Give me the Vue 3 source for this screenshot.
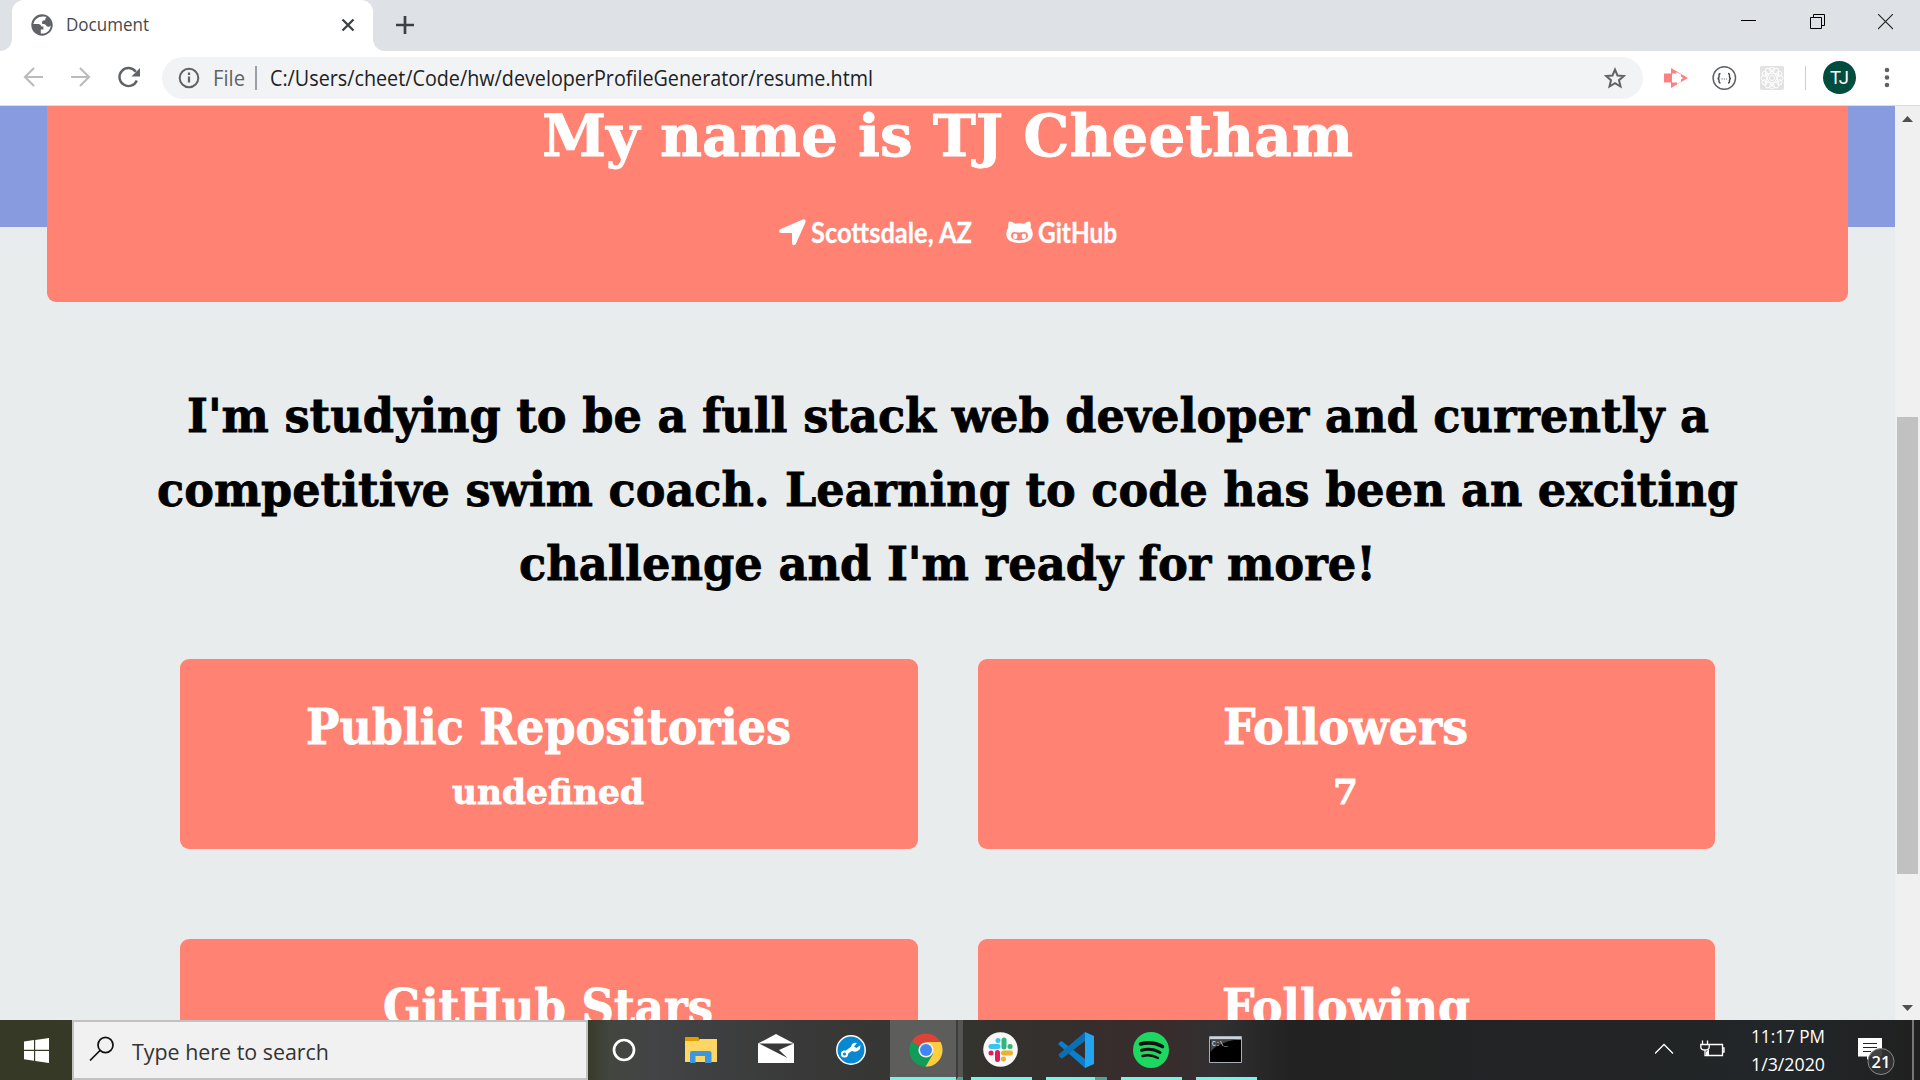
<script setup>
import { h } from 'vue'

// One line of text set to an exact measure
const Line = (p) =>
  h('svg', { class: 'line', width: p.w, height: p.size * 1.2, style: 'display:block;overflow:visible;flex:none' }, [
    h('text', { x: 0, y: p.size, 'font-size': p.size, textLength: p.w, lengthAdjust: 'spacingAndGlyphs', fill: 'currentColor' }, p.text)
  ])
Line.props = ['text', 'w', 'size']

const bio = [
  { text: "I'm studying to be a full stack web developer and currently a", w: 1522 },
  { text: 'competitive swim coach. Learning to code has been an exciting', w: 1581 },
  { text: "challenge and I'm ready for more!", w: 857 }
]
const cards = [
  { title: 'Public Repositories', w: 485, value: 'undefined', vw: 192 },
  { title: 'Followers', w: 245, value: '7', vw: 25 },
  { title: 'GitHub Stars', w: 330 },
  { title: 'Following', w: 248 }
]
</script>

<template>
  <div class="screen">
    <div class="tabs">
      <div class="tabfoot"></div>
      <div class="tab">
        <svg width="22" height="22" viewBox="0 0 22 22"><circle cx="11" cy="11" r="10.7" fill="#5f6368" /><path d="M12 2.500c-5 .2-8.800 3-9.600 7.500l5 .1c1.600 0 2.600 1 2.800 2.400h2.200v3H9.800v4c6 .6 9.600-3.300 9.900-8.100-1.200 1.700-3.700 1.600-4.400.3-.6-1.400-2.100-1.900-3.900-1.700-1.200-2.600.2-3.700 2.700-3.800.2-1.700.9-2.600 1.600-3.100-1.100-.5-2.400-.7-3.700-.6z" fill="#fff" /></svg>
        <Line class="doc" text="Document" :w="83" :size="18.500" />
        <svg class="close" width="14" height="14" viewBox="0 0 14 14"><path d="M1.500 1.500l11 11m0-11l-11 11" stroke="#3c4043" stroke-width="2.300" /></svg>
      </div>
      <div class="rest">
        <svg class="plus" width="18" height="18" viewBox="0 0 18 18"><path d="M9 0v18M0 9h18" stroke="#3c4043" stroke-width="2.700" /></svg>
        <div class="wins">
          <svg width="15" height="16" viewBox="0 0 15 16"><path d="M0 6.500h15" stroke="#000" /></svg>
          <svg width="15" height="16" viewBox="0 0 15 16"><path d="M.5 3.500h11v11H.5zM3.500 3.500v-3h11v11h-3" fill="none" stroke="#000" /></svg>
          <svg width="15" height="16" viewBox="0 0 15 16"><path d="M0 0l15 15m0-15L0 15" stroke="#222" stroke-width="1.100" /></svg>
        </div>
      </div>
    </div>

    <div class="toolbar">
      <svg width="140" height="54" viewBox="0 0 140 54"><g fill="none" stroke-width="2.200"><path d="M43 26H25m9-9l-9 9 9 9M71 26h18m-9-9l9 9-9 9" stroke="#babcbe" /><path d="M136.800 29.500a9 9 0 1 1-1-8.700" stroke="#5f6368" stroke-width="2.400" /></g><path d="M140 17v8.500h-8.500z" fill="#5f6368" /></svg>
      <div class="omni">
        <svg width="22" height="22" viewBox="0 0 22 22"><circle cx="11" cy="11" r="9.300" fill="none" stroke="#5f6368" stroke-width="2" /><path d="M11 9.500v6M11 5.500v2.400" stroke="#5f6368" stroke-width="2.200" /></svg>
        <Line class="file" text="File" :w="32" :size="21.500" />
        <i class="bar"></i>
        <Line class="url" text="C:/Users/cheet/Code/hw/developerProfileGenerator/resume.html" :w="603" :size="21.500" />
        <svg class="star" width="22" height="22" viewBox="0 0 22 22"><path d="M11 2.600l2.500 5.900 6.400.5-4.900 4.200 1.500 6.300L11 16.200l-5.500 3.300L7 13.200 2.100 9l6.400-.5z" fill="none" stroke="#5f6368" stroke-width="2" /></svg>
      </div>
      <svg class="ext" width="256" height="36" viewBox="0 0 256 36">
        <g fill="#ff8080"><path d="M0 13.500h7.500v9H0zM7 8l17 10-17 10z" /><path d="M8 13.500h4.500V12l4.500 2.500v2l2 1.500-2 1.500v2.500l-4 2v-1.500H8z" fill="#fff" /></g>
        <circle cx="60.300" cy="18" r="11.200" fill="none" stroke="#5f6368" stroke-width="1.500" />
        <path d="M56.500 13.500q-1.500 0-1.500 1.500v2q0 1.500-1.500 1.500 1.500 0 1.500 1.500v1.500q0 1.500 1.500 1.500m7.500-9.500q1.500 0 1.500 1.500v2q0 1.500 1.500 1.500-1.500 0-1.500 1.500v1.500q0 1.500-1.500 1.500" fill="none" stroke="#444" stroke-width="1.400" />
        <path d="M57.500 19h1.200m1 0h1.200m1 0h1.200" stroke="#777" stroke-width="1.200" />
        <rect x="96" y="6" width="24" height="24" rx="2" fill="#e2e2e2" />
        <g fill="none" stroke="#fff" stroke-width=".9"><circle cx="108" cy="18" r="2.600" /><ellipse v-for="a in 3" :key="a" cx="108" cy="18" rx="11" ry="4.500" :transform="`rotate(${a * 60} 108 18)`" /><circle v-for="a in 6" :key="'c' + a" cx="108" cy="9.500" r="2.500" :transform="`rotate(${a * 60} 108 18)`" /></g>
        <path d="M141.500 6v24" stroke="#ccc" />
        <circle cx="175.500" cy="17.500" r="16.500" fill="#004d40" />
        <text x="175.500" y="24" text-anchor="middle" font-family="Roboto, sans-serif" font-size="18.500" fill="#fff">TJ</text>
        <g fill="#5f6368"><circle cx="223" cy="10" r="2.300" /><circle cx="223" cy="17.500" r="2.300" /><circle cx="223" cy="25" r="2.300" /></g>
      </svg>
    </div>

    <div class="view">
      <div class="page">
        <header>
          <div class="hero">
            <Line class="slab name" text="My name is TJ Cheetham" :w="811" :size="58" />
            <div class="links">
              <svg width="27" height="27" viewBox="0 0 27 27"><path d="M23.800.4Q27.200-.3 26.500 3.200L17 24.500q-.8 1.800-2.300 1.800T13 24.500V14H2.500Q.4 14 .2 12.400T1.600 10z" fill="#fff" /></svg>
              <Line class="loc" text="Scottsdale, AZ" :w="161" :size="28" />
              <svg class="cat" width="27" height="23" viewBox="0 0 27 23"><path fill="#fff" d="M3 .5q3-.2 6 2.200 4.500-.8 9 0Q21 .3 24 .5q1.300 3 .5 6 3 3.500 2 8.500-1.500 7-13 7t-13-7q-1-5 2-8.500-.8-3 .5-6z" /><path d="M8.500 11q5 .9 10 0 3.500 0 3.500 4-.5 4.300-8.500 4.300T5 15q0-4 3.500-4z" fill="#ff8272" /><rect x="7" y="12.500" width="4.300" height="5.600" rx="2.100" fill="#fff" /><rect x="15.700" y="12.500" width="4.300" height="5.600" rx="2.100" fill="#fff" /></svg>
              <Line class="loc" text="GitHub" :w="79" :size="28" />
            </div>
          </div>
        </header>
        <section class="bio"><Line v-for="b in bio" :key="b.text" class="slab" :text="b.text" :w="b.w" :size="47" /></section>
        <section class="cards">
          <article v-for="c in cards" :key="c.title">
            <Line class="slab" :text="c.title" :w="c.w" :size="48" />
            <Line v-if="c.value" class="slab value" :text="c.value" :w="c.vw" :size="34" />
          </article>
        </section>
      </div>
      <div class="scroll">
        <svg width="11" height="6"><path d="M0 6l5.500-6L11 6z" fill="#505050" /></svg>
        <div class="thumb"></div>
        <svg class="down" width="11" height="6"><path d="M0 0l5.500 6L11 0z" fill="#505050" /></svg>
      </div>
    </div>

    <div class="taskbar">
      <div class="start"><svg width="25" height="25" viewBox="0 0 25 25"><path d="M0 3.500l10-1.400v9.700H0zM11.200 2L25 0v11.800H11.200zM0 13h10v9.700L0 21.300zM11.200 13H25v12l-13.800-2z" fill="#fff" /></svg></div>
      <div class="search">
        <svg width="26" height="26" viewBox="0 0 26 26"><ellipse cx="16.500" cy="9" rx="7.500" ry="7.700" fill="none" stroke="#111" stroke-width="1.700" /><path d="M11 14.500L1 24.500" stroke="#111" stroke-width="1.700" /></svg>
        <Line text="Type here to search" :w="197" :size="22" />
      </div>
      <div class="app first"><svg width="24" height="24" viewBox="0 0 24 24"><circle cx="12" cy="12" r="10" fill="none" stroke="#fff" stroke-width="2.700" /></svg></div>
      <div class="app"><svg width="32" height="28" viewBox="0 0 32 28"><path d="M0 1h13l1.500 2L13 5H0z" fill="#e19d00" /><path d="M0 5h13l2-2h17v23H0z" fill="#ffd663" /><path d="M5 27V17q0-2 2-2h17.500q2 0 2 2v10H20v-7h-9.500v7z" fill="#3b97df" /></svg></div>
      <div class="app"><svg class="mail" width="36" height="30" viewBox="0 0 36 30"><path d="M0 9.500L18 0l18 9.500V29H0z" fill="#fff" /><path d="M1 9.500h34.500L21 16l8.500 8L1 9.500z" fill="#383838" /></svg></div>
      <div class="app"><svg width="30" height="30" viewBox="0 0 30 30"><circle cx="15" cy="15" r="14.200" fill="#0788d1" stroke="#fff" stroke-width="1.500" /><path d="M8.500 19l4-3 4-3" stroke="#fff" stroke-width="4" /><circle cx="8.500" cy="19" r="2.600" fill="#0788d1" stroke="#fff" stroke-width="2" /><path d="M21 8q-5-1-6 4l1 4q5 2 8-2l.5-4-4 3-2.500-1.500z" fill="#fff" /></svg></div>
      <div class="app chrome"><svg width="34" height="34" viewBox="0 0 34 34"><path d="M17 17L2.500 8.700A16.700 16.700 0 0 1 31.500 9z" fill="#db4437" /><path d="M2.500 8.700A16.700 16.700 0 0 0 16.500 33.700L24 21 17 17z" fill="#0f9d58" /><path d="M31.500 9A16.700 16.700 0 0 1 16.500 33.700L24 21V9z" fill="#ffcd40" /><path d="M17 9h14.500L24 17z" fill="#ffcd40" /><circle cx="17" cy="17" r="7.600" fill="#f1f1f1" /><circle cx="17" cy="17" r="6" fill="#4285f4" /></svg></div>
      <div class="stack"></div>
      <div class="app on"><svg width="35" height="35" viewBox="0 0 35 35"><circle cx="17.500" cy="17.500" r="17.300" fill="#f8f8f8" /><g stroke-width="5" stroke-linecap="round"><path d="M8 14.500h7M15 8.500v.1" stroke="#36c5f0" /><path d="M21 8v7M27 14.500h.1" stroke="#2eb67d" /><path d="M20.500 21h7M20.500 27v.1" stroke="#ecb22e" /><path d="M14.500 20.500v7M8 21h.1" stroke="#e01e5a" /></g></svg></div>
      <div class="app on two"><svg width="36" height="36" viewBox="0 0 36 36"><path d="M.5 12.500Q0 10.500 3.500 9L27 27v9z" fill="#0a7fcb" /><path d="M.5 22.500Q1 25.500 3.800 26.800L27 9V0z" fill="#0b6fb4" /><path d="M27 0l9 4v28l-9 4z" fill="#24a5f2" /></svg></div>
      <div class="app on"><svg width="36" height="36" viewBox="0 0 36 36"><circle cx="18" cy="18" r="18" fill="#1ed760" /><g fill="none" stroke="#101010" stroke-linecap="round"><path d="M7.500 12q12-3.200 22 2.500" stroke-width="3.600" /><path d="M8.500 18.200q10.500-2.500 18.500 2.300" stroke-width="3" /><path d="M9.500 24q8.500-2 15.500 2" stroke-width="2.500" /></g></svg></div>
      <div class="app on"><svg class="cmd" width="33" height="27" viewBox="0 0 33 27"><path d="M.5.500h32v26H.5z" fill="#000" stroke="#a9afb5" /><path d="M1 1h31v2.500H1z" fill="#ccd3da" /><path d="M1.500 3.500h26Q8 7 1.500 16z" fill="#444" /><text x="3" y="10" font-family="Liberation Mono, monospace" font-size="6.500" fill="#fff">C:\_</text></svg></div>
      <div class="tray">
        <svg width="72" height="40" viewBox="0 0 72 40"><g fill="none" stroke="#fff" stroke-width="1.300"><path d="M0 25.500l9-9 9 9" /><path d="M53 16.500h14.500v11H51M67.500 20h1.500v4h-1.500M47.500 12.500v4m5-4v4M45.800 16.500h8.400V19q0 3-4.200 3t-4.200-3zM50 22v5.500h3" /></g><path d="M51 27v-3l3-3v6z" fill="#fff" /></svg>
        <div class="clock"><Line text="11:17 PM" :w="74" :size="18.500" /><Line text="1/3/2020" :w="74" :size="18.500" /></div>
        <svg class="note" width="40" height="40" viewBox="0 0 40 40"><path d="M0 2h24v18.500H12l-3 3.500v-3.500H0z" fill="#fff" /><path d="M5 7.500h14M5 11.500h14M5 15.500h8" stroke="#222" stroke-width="1.200" /><circle cx="23" cy="25.500" r="13" fill="#333" fill-opacity=".92" stroke="#888" /><text x="23" y="31.500" text-anchor="middle" font-size="16.500" font-weight="600" fill="#fff">21</text></svg>
        <i class="edge"></i>
      </div>
    </div>
  </div>
</template>

<style>
body { margin: 0; overflow: hidden; }
</style>
<style scoped>
* { box-sizing: border-box; }
.screen { width: 1920px; height: 1080px; display: flex; flex-direction: column; overflow: hidden; font-family: "Open Sans", "Noto Sans", sans-serif; background: #fff; }
svg { flex: none; display: block; }
.tabs { height: 51px; display: flex; flex: none; background: #fff; }
.tabfoot { width: 12px; background: #dee1e6; border-bottom-right-radius: 12px; }
.tab { width: 361px; display: flex; padding: 14px 0 0 19px; position: relative; background: linear-gradient(#dee1e6 0 14px, #fff 14px); }
.tab::before { content: ""; position: absolute; inset: 0; background: #fff; border-radius: 12px 12px 0 0; }
.tab > * { position: relative; }
.doc { margin: -2px 0 0 13px; color: #45494d; }
.close { margin: 4px 0 0 192px; }
.rest { flex: 1; background: #dee1e6; border-bottom-left-radius: 12px; display: flex; justify-content: space-between; padding: 14px 27px 0 23px; }
.plus { margin-top: 2px; }
.wins { display: flex; gap: 53.500px; }
.toolbar { height: 55px; flex: none; display: flex; border-bottom: 1px solid #dadce0; }
.omni { margin: 6px 0 0 22px; width: 1481px; height: 42px; border-radius: 21px; background: #f1f3f4; display: flex; padding: 10px 17px 0 16px; }
.file { margin: -3px 0 0 13px; color: #5f6368; }
.bar { width: 2px; height: 24px; background: #9aa0a6; margin: -1px 13px 0 10px; }
.url { color: #202124; margin-top: -3px; }
.star { margin-left: auto; }
.ext { margin: 9px 0 0 21px; }
.view { height: 914px; flex: none; display: flex; overflow: hidden; }
.page { width: 1895px; background: #e8eced; color: #000; overflow: hidden; }
header { background: linear-gradient(#889bde 0 121px, transparent 121px); padding: 0 47px; }
.hero { height: 196px; background: #ff8272; border-radius: 0 0 9px 9px; color: #fff; display: flex; flex-direction: column; align-items: center; }
.slab { font-family: "DejaVu Serif", serif; font-weight: 700; stroke: currentColor; stroke-width: .8px; }
.name { margin-top: -8px; }
.links { display: flex; margin-top: 51px; }
.loc { font-family: Lato, sans-serif; font-weight: 700; margin: -4px 0 0 5px; stroke: currentColor; stroke-width: .3px; }
.cat { margin: 2px 0 0 34px; }
.bio { display: flex; flex-direction: column; align-items: center; gap: 17.600px; padding-top: 83px; }
.cards { display: grid; grid-template-columns: 738px 737px; gap: 90px 60px; padding: 70px 0 0 180px; }
article { height: 190px; border-radius: 9px; background: #ff8272; color: #fff; display: flex; flex-direction: column; align-items: center; padding: 37px 2px 0 0; }
.value { margin-top: 16px; }
.scroll { flex: 1; background: #f0f0f0; display: flex; flex-direction: column; align-items: center; padding-top: 10px; }
.thumb { width: 21px; height: 457px; margin-top: 295px; background: #c1c1c1; }
.down { margin-top: 131px; }
.taskbar { height: 60px; flex: none; display: flex; background: linear-gradient(90deg, #373927 0, #383a2a 588px, #43463f 610px, #424445 650px, #393939 800px, #33342f 960px, #352e2d 1080px, #3a2c2c 1160px, #303032 1220px, #222 1290px, #222628 1800px, #202020); }
.start { width: 72px; padding: 18px 24px; }
.search { width: 516px; border: 2px solid #c2c2c2; background: #f1f1f1; color: #333; display: flex; padding: 14px 0 0 15px; gap: 17px; }
.search .line { margin-top: 2px; }
.app { width: 61px; margin-right: 14px; height: 60px; display: flex; align-items: center; justify-content: center; }
.first { margin: 0 16px 0 5px; }
.mail { margin-bottom: 2px; }
.chrome { width: 66px; margin-left: -5px; margin-right: 0; background: #5d5d5b; border-bottom: 3px solid #76f3ed; padding: 2px 0 0 5px; }
.stack { width: 7px; border-left: 2px solid #3c3c3a; border-bottom: 3px solid #559e9a; background: #555551; margin-right: 8px; }
.on { border-bottom: 3px solid #76f3ed; padding: 2px 2px 0 0; }
.cmd { margin-bottom: 1px; }
.two { border-image: linear-gradient(90deg, #76f3ed 77%, #559e9a 77%) 3; border-style: solid; border-width: 0 0 3px; }
.tray { flex: 1; display: flex; justify-content: flex-end; color: #fff; }
.tray > svg:first-child { margin: 8px 24px 0 0; }
.clock { display: flex; flex-direction: column; gap: 6px; padding-top: 4px; }
.note { margin: 16px 14px 0 33px; }
.edge { width: 2px; background: #777; margin-right: 6px; }
</style>
